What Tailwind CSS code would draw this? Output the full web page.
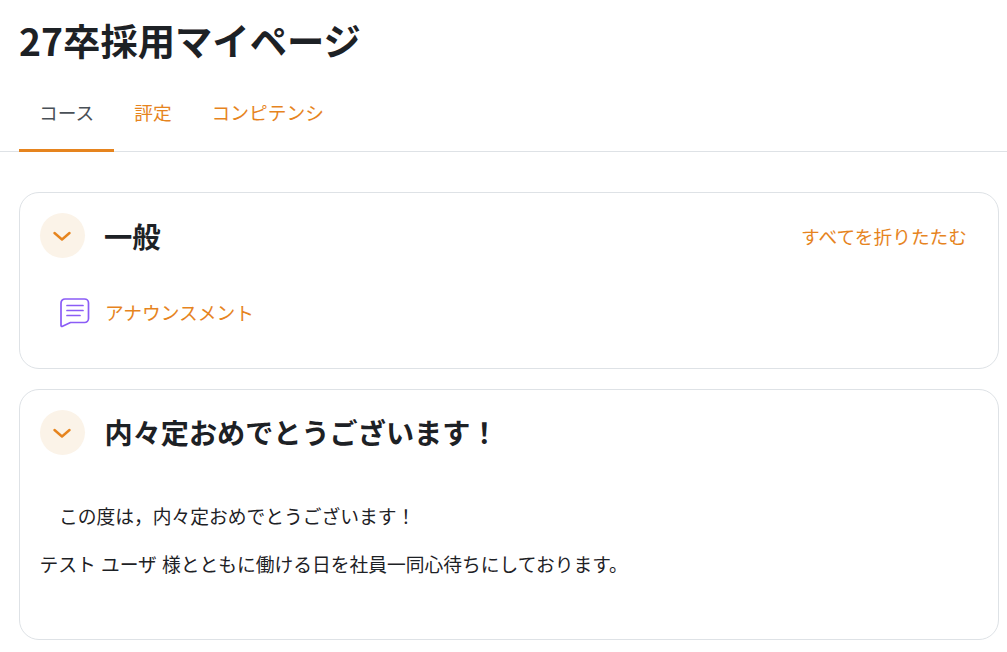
<!DOCTYPE html>
<html lang="ja">
  <head>
    <meta charset="UTF-8" />
    <title>27卒採用マイページ</title>
    <script src="https://cdn.jsdelivr.net/npm/@tailwindcss/browser@4"></script>
  </head>
  <body class="bg-white overflow-hidden text-[#1d2125] font-['Noto_Sans_CJK_JP','Noto_Sans',sans-serif]">
    <!-- Header -->
    <h1 class="px-[19px] pt-[14px] text-[37.33px] leading-[52px] font-bold">27卒採用マイページ</h1>

    <!-- Tabs -->
    <nav class="flex mt-[16px] pl-[19px] h-[70px] border-b border-[#dee2e6] text-[18.72px]">
      <a class="flex items-center h-[70px] px-5 pb-[6px] border-b-[3px] border-[#e6841e] text-[#495057]">コース</a>
      <a class="flex items-center h-[70px] px-5 pb-[9px] text-[#e6841e]">評定</a>
      <a class="flex items-center h-[70px] px-5 pb-[9px] text-[#e6841e]">コンピテンシ</a>
    </nav>

    <main class="px-[19px] pt-10 flex flex-col gap-5 w-[999px] box-content">
      <!-- General section -->
      <section class="h-[177px] w-[980px] border border-[#dee2e6] rounded-[20px] px-5 pt-5">
        <div class="flex items-center h-[45px]">
          <span class="flex items-center justify-center w-[45px] h-[45px] rounded-full bg-[#fbf3e8]">
            <svg class="w-5 h-5" viewBox="0 0 20 20" fill="none" stroke="#e6841e" stroke-width="2.4" stroke-linecap="round" stroke-linejoin="round"><path d="M1.500 7l7.500 6.500L16.500 7" /></svg>
          </span>
          <h2 class="ml-[19px] pt-[2px] text-[28.3px] font-bold">一般</h2>
          <a class="ml-auto mr-[11px] pt-[2px] text-[18.72px] text-[#e6841e]">すべてを折りたたむ</a>
        </div>
        <div class="flex items-center mt-[39px] ml-5">
          <svg class="w-[30px] h-[30px] mt-[1px] -mb-[1px]" viewBox="0 0 30 30" fill="none" stroke="#8b5cf6" stroke-width="1.7" stroke-linecap="round" stroke-linejoin="round"><path d="M5 1h19.500a4 4 0 0 1 4 4v15.500a4 4 0 0 1-4 4H10.500l-8.500 4a1 1 0 0 1-1-1V5a4 4 0 0 1 4-4z" /><path d="M7 7.500h16M7 12.500h16M7 17.500h13" /></svg>
          <a class="ml-[15px] text-[18.72px] text-[#e6841e]">アナウンスメント</a>
        </div>
      </section>

      <!-- Offer section -->
      <section class="h-[251px] w-[980px] border border-[#dee2e6] rounded-[20px] px-5 pt-5">
        <div class="flex items-center h-[45px]">
          <span class="flex items-center justify-center w-[45px] h-[45px] rounded-full bg-[#fbf3e8]">
            <svg class="w-5 h-5" viewBox="0 0 20 20" fill="none" stroke="#e6841e" stroke-width="2.4" stroke-linecap="round" stroke-linejoin="round"><path d="M1.500 7l7.500 6.500L16.500 7" /></svg>
          </span>
          <h2 class="ml-[19.500px] text-[28.15px] font-bold">内々定おめでとうございます！</h2>
        </div>
        <div class="mt-[47px] text-[18.75px] leading-[27px] [word-spacing:1px]">
          <p class="pl-[19px]">この度は，内々定おめでとうございます！</p>
          <p class="mt-[21px] -ml-[0.500px]">テスト ユーザ 様とともに働ける日を社員一同心待ちにしております。</p>
        </div>
      </section>
    </main>
  </body>
</html>
